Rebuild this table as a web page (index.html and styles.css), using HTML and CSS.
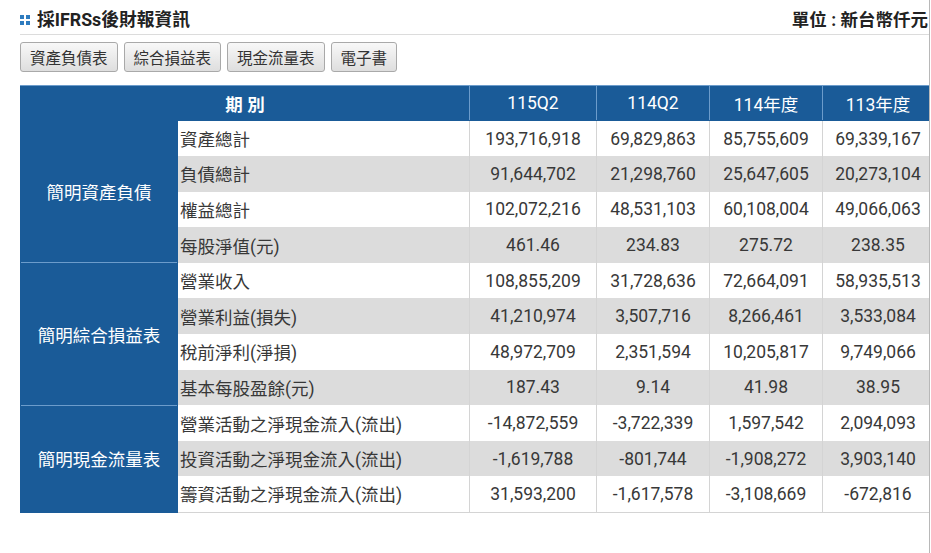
FILE: index.html
```html
<!DOCTYPE html>
<html lang="zh-Hant">
<head>
<meta charset="utf-8">
<title>採IFRSs後財報資訊</title>
<link rel="stylesheet" href="styles.css">
</head>
<body>
<div class="page">
  <div class="head">
    <h2 class="title">
      <svg class="ico" width="10" height="10" viewBox="0 0 10 10"><rect x="0" y="0" width="4" height="4"/><rect x="6" y="0" width="4" height="4"/><rect x="0" y="6" width="4" height="4"/><rect x="6" y="6" width="4" height="4"/></svg>
      採IFRSs後財報資訊
    </h2>
    <div class="unit">單位 : 新台幣仟元</div>
  </div>
  <div class="tabs">
    <button class="btn">資產負債表</button>
    <button class="btn">綜合損益表</button>
    <button class="btn">現金流量表</button>
    <button class="btn">電子書</button>
  </div>
  <table class="fin">
    <colgroup>
      <col class="c-grp"><col class="c-lbl"><col class="c-a"><col class="c-b"><col class="c-b"><col class="c-d">
    </colgroup>
    <thead>
      <tr><th colspan="2" class="period">期 別</th><th>115Q2</th><th>114Q2</th><th>114年度</th><th>113年度</th></tr>
    </thead>
    <tbody class="g1">
      <tr><td rowspan="4" class="grp">簡明資產負債</td><td class="lbl">資產總計</td><td>193,716,918</td><td>69,829,863</td><td>85,755,609</td><td>69,339,167</td></tr>
      <tr class="alt"><td class="lbl">負債總計</td><td>91,644,702</td><td>21,298,760</td><td>25,647,605</td><td>20,273,104</td></tr>
      <tr><td class="lbl">權益總計</td><td>102,072,216</td><td>48,531,103</td><td>60,108,004</td><td>49,066,063</td></tr>
      <tr class="alt"><td class="lbl">每股淨值(元)</td><td>461.46</td><td>234.83</td><td>275.72</td><td>238.35</td></tr>
    </tbody>
    <tbody>
      <tr><td rowspan="4" class="grp">簡明綜合損益表</td><td class="lbl">營業收入</td><td>108,855,209</td><td>31,728,636</td><td>72,664,091</td><td>58,935,513</td></tr>
      <tr class="alt"><td class="lbl">營業利益(損失)</td><td>41,210,974</td><td>3,507,716</td><td>8,266,461</td><td>3,533,084</td></tr>
      <tr><td class="lbl">稅前淨利(淨損)</td><td>48,972,709</td><td>2,351,594</td><td>10,205,817</td><td>9,749,066</td></tr>
      <tr class="alt"><td class="lbl">基本每股盈餘(元)</td><td>187.43</td><td>9.14</td><td>41.98</td><td>38.95</td></tr>
    </tbody>
    <tbody class="last">
      <tr><td rowspan="3" class="grp">簡明現金流量表</td><td class="lbl">營業活動之淨現金流入(流出)</td><td>-14,872,559</td><td>-3,722,339</td><td>1,597,542</td><td>2,094,093</td></tr>
      <tr class="alt"><td class="lbl">投資活動之淨現金流入(流出)</td><td>-1,619,788</td><td>-801,744</td><td>-1,908,272</td><td>3,903,140</td></tr>
      <tr><td class="lbl">籌資活動之淨現金流入(流出)</td><td>31,593,200</td><td>-1,617,578</td><td>-3,108,669</td><td>-672,816</td></tr>
    </tbody>
  </table>
</div>
</body>
</html>
```
FILE: styles.css
```css
* { box-sizing: border-box; }
html, body { margin: 0; padding: 0; background: #fff; }
body {
  font-family: Roboto, "Noto Sans CJK TC", "Noto Sans", sans-serif;
  color: #333;
}
.page {
  width: 930px;
  min-height: 553px;
  border-right: 1px solid #b8b8b8;
  overflow: hidden;
  padding-left: 20px;
}
.head {
  display: flex;
  justify-content: space-between;
  align-items: flex-end;
  height: 35px;
  padding-bottom: 3px;
  border-bottom: 1px solid #dcdcdc;
}
.title {
  margin: 0;
  font-size: 17.8px;
  font-weight: bold;
  color: #222;
  display: flex;
  align-items: center;
  gap: 7px;
  line-height: 22px;
}
.ico { fill: #2e7cbf; display: block; }
.unit {
  font-size: 17.5px;
  font-weight: bold;
  color: #222;
  line-height: 22px;
  padding-right: 1px;
}
.tabs {
  display: flex;
  gap: 6px;
  margin-top: 7px;
}
.btn {
  font-family: "Noto Sans CJK TC", sans-serif;
  font-size: 15.5px;
  color: #333;
  height: 30px;
  padding: 0 9px;
  background: linear-gradient(#f8f8f8, #dedede);
  border: 1px solid #a9a9a9;
  border-radius: 3px;
  line-height: 26px;
}
.fin {
  margin-top: 13px;
  border-collapse: collapse;
  table-layout: fixed;
  width: 913px;
  font-size: 17.5px;
}
.c-grp { width: 157px; }
.c-lbl { width: 292px; }
.c-a { width: 127px; }
.c-b { width: 113px; }
.c-d { width: 111px; }
.fin th {
  background: #1a5b98;
  color: #fff;
  font-weight: 400;
  height: 35px;
  border: 1px solid #6c9ccb;
  border-bottom-color: #1a5b98;
  text-align: center;
  padding: 0;
}
.fin th.period { font-weight: bold; border-left-color: #1a5b98; }
.fin td {
  height: 35.6px;
  border: 1px solid #d4d4d4;
  border-top: none;
  border-bottom: none;
  text-align: center;
  padding: 0;
  white-space: nowrap;
  color: #383838;
}
.fin tr.alt td { background: #dcdcdc; }
.fin td.lbl { text-align: left; padding-left: 2px; }
.fin td.grp {
  background: #1a5b98;
  color: #fff;
  border-left: 1px solid #1a5b98;
  border-right: 1px solid #1a5b98;
  border-top: 1px solid #6c9ccb;
  border-bottom: none;
}
.fin tbody.g1 td.grp { border-top-color: #1a5b98; }
.fin tbody.last tr:last-child td { border-bottom: 1px solid #d4d4d4; }
.fin tbody.last td.grp { border-bottom: 1px solid #1a5b98; }
```
